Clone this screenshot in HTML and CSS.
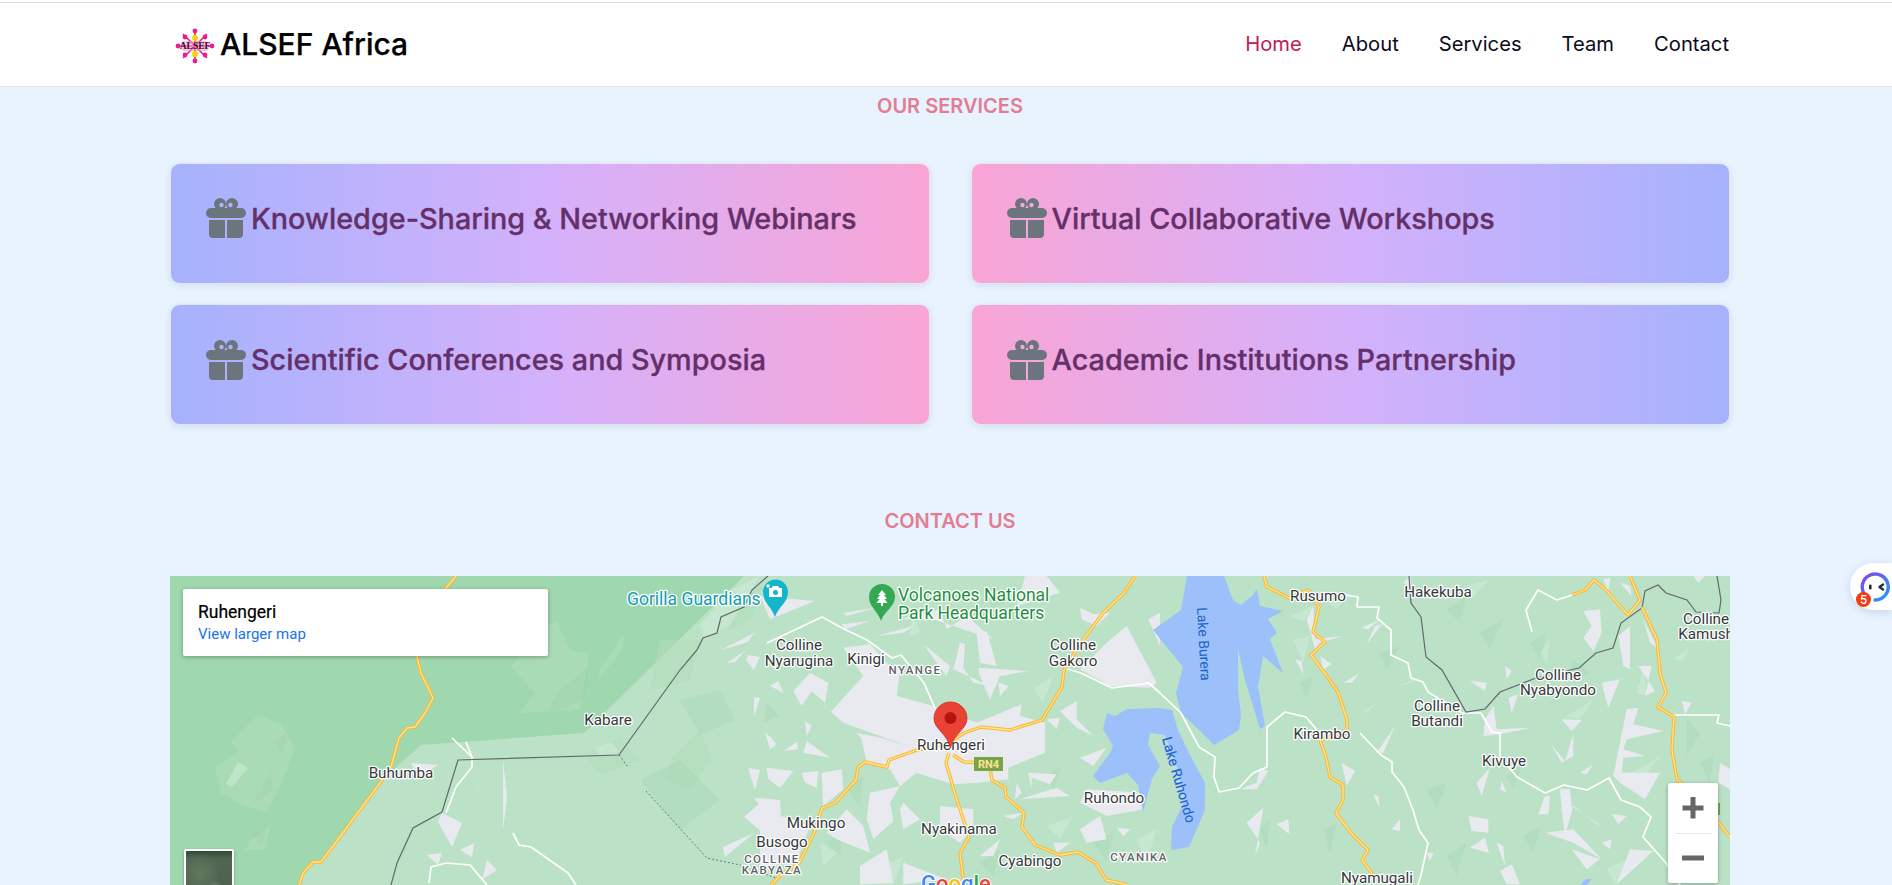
FILE: index.html
```html
<!DOCTYPE html>
<html lang="en">
<head>
<meta charset="utf-8">
<title>ALSEF Africa</title>
<link rel="stylesheet" href="styles.css">
</head>
<body>
<header class="site-header">
  <div class="header-inner">
    <a class="brand" href="#">
      <svg class="brand-logo" viewBox="0 0 40 36" aria-hidden="true">
        <g class="logo-spokes">
          <path d="M20 3V33M3 18H37M8 6L32 30M32 6L8 30"/>
        </g>
        <rect class="logo-glow" x="6" y="13" width="28" height="10" rx="4"/>
        <circle class="logo-core" cx="20" cy="10" r="3"/>
        <circle class="logo-core" cx="20" cy="26" r="3"/>
        <g class="logo-dots">
          <circle cx="20" cy="3" r="2.4"/><circle cx="20" cy="33" r="2.4"/>
          <circle cx="3" cy="18" r="2.4"/><circle cx="37" cy="18" r="2.4"/>
          <circle cx="10" cy="9" r="2.4"/><circle cx="30" cy="9" r="2.4"/>
          <circle cx="10" cy="27" r="2.4"/><circle cx="30" cy="27" r="2.4"/>
        </g>
        <text class="logo-text" x="20" y="21">ALSEF</text>
      </svg>
      <span class="brand-name">ALSEF Africa</span>
    </a>
    <nav class="main-nav">
      <a class="nav-link active" href="#">Home</a>
      <a class="nav-link" href="#">About</a>
      <a class="nav-link" href="#">Services</a>
      <a class="nav-link" href="#">Team</a>
      <a class="nav-link" href="#">Contact</a>
    </nav>
  </div>
</header>

<main class="page">
  <section class="services">
    <h2 class="section-label">OUR SERVICES</h2>
    <div class="service-grid">
      <div class="service-card to-pink">
        <svg class="gift" viewBox="0 0 40 40"><use href="#gift-icon"/></svg>
        <h3 class="service-title">Knowledge-Sharing &amp; Networking Webinars</h3>
      </div>
      <div class="service-card to-blue">
        <svg class="gift" viewBox="0 0 40 40"><use href="#gift-icon"/></svg>
        <h3 class="service-title">Virtual Collaborative Workshops</h3>
      </div>
      <div class="service-card to-pink">
        <svg class="gift" viewBox="0 0 40 40"><use href="#gift-icon"/></svg>
        <h3 class="service-title">Scientific Conferences and Symposia</h3>
      </div>
      <div class="service-card to-blue">
        <svg class="gift" viewBox="0 0 40 40"><use href="#gift-icon"/></svg>
        <h3 class="service-title">Academic Institutions Partnership</h3>
      </div>
    </div>
  </section>

  <section class="contact">
    <h2 class="section-label">CONTACT US</h2>
    <div class="map">
      <svg class="map-canvas" viewBox="170 576 1560 309" preserveAspectRatio="none">
        <defs>
          <g id="roads">
            <path d="M456 576L446 588L417 657L421 673L433 698L425 713L415 727L407 728L399 738L391 767L380 783L321 862L313 862L303 873L299 885"/>
            <path d="M1135 576L1124 593L1103 613L1083 640L1064 670L1062 687L1042 720L1010 730L981 727L964 733L949 743L917 750L889 760L887 767L865 762L858 767L856 780L835 803L822 808L814 833L799 863L781 875L771 885"/>
            <path d="M949 753L946 763L956 797L969 837L960 853L964 885"/>
            <path d="M953 755L964 762L989 763L992 780L1005 788L1006 797L1024 813L1022 827L1035 845L1060 855L1078 852L1096 863L1106 880L1128 885"/>
            <path d="M1264 576L1267 587L1289 598L1308 590L1319 607L1313 632L1325 642L1311 655L1326 675L1338 692L1347 720L1347 732L1320 740L1326 757L1330 777L1343 785L1343 800L1336 813L1353 835L1368 850L1362 860L1375 877"/>
            <path d="M1630 576L1640 600L1628 615L1606 590L1594 580L1585 590L1572 595"/>
            <path d="M1642 607L1657 640L1660 673L1666 693L1658 707L1674 717L1672 750L1677 780L1700 795L1719 823L1730 837"/>
          </g>
        </defs>

        <rect class="land" x="170" y="576" width="1560" height="309"/>
        <polygon class="forest" points="170,576 744,576 584,733 421,745 393,770 380,783 321,862 313,862 303,873 299,885 170,885"/>

        <g class="hill-light">
          <polygon points="258,715 282,725 295,747 282,783 266,813 238,803 221,793 215,768 238,752 231,742"/>
          <polygon points="511,667 534,640 556,620 570,650 589,653 580,710 519,713 535,693"/>
          <polygon points="600,670 624,633 622,650 598,680"/>
          <polygon points="660,640 700,640 690,680 650,690"/>
          <polygon points="585,755 620,738 640,760 600,775"/>
          <polygon points="672,757 700,730 712,760 690,790 665,780"/>
          <polygon points="740,600 765,585 750,620 728,630"/>
          <polygon points="250,840 270,825 265,850 245,850"/>
        </g>
        <g class="hill-dark">
          <polygon points="262,790 270,770 272,790 252,803"/>
          <polygon points="275,740 287,733 282,755"/>
          <polygon points="560,690 588,667 585,700 555,712 548,710"/>
          <polygon points="252,835 268,825 262,845"/>
          <polygon points="680,700 720,690 735,720 700,735"/>
          <polygon points="640,780 680,760 720,800 680,830"/>
        </g>
        <g class="hill-pale">
          <polygon points="238,762 248,768 232,787 226,784"/>
          <polygon points="595,748 612,742 620,752 600,757"/>
          <polygon points="730,590 760,576 730,625 705,640 700,625"/>
        </g>

        <g transform="translate(760 576) scale(.33333)">
          <g class="hill-dark">
            <polygon points="260,640 310,600 300,690"/>
            <polygon points="200,800 250,760 240,840"/>
            <polygon points="20,380 60,420 10,440"/>
            <polygon points="860,600 905,570 880,640"/>
            <polygon points="1000,800 1060,770 1040,860"/>
            <polygon points="660,860 720,820 700,900"/>
            <polygon points="1100,550 1180,500 1140,610"/>
            <polygon points="700,30 760,70 690,100"/>
          </g>
          <g class="hill-pale">
            <polygon points="350,880 430,840 400,925 340,925"/>
            <polygon points="180,800 230,830 190,870"/>
            <polygon points="860,750 940,720 900,790"/>
            <polygon points="1130,790 1190,760 1160,860"/>
            <polygon points="460,100 480,170 450,180"/>
            <polygon points="820,340 880,300 850,380"/>
          </g>
          <g class="urban">
            <polygon points="212,408 310,300 250,215 330,205 380,260 420,285 410,360 520,390 650,440 785,385 780,420 855,440 855,530 745,575 745,610 650,620 580,625 530,610 470,590 420,630 390,580 320,560 305,490 290,470 380,490 470,520 250,440"/>
            <polygon points="100,345 150,290 205,320 195,380 155,345 125,390"/>
            <polygon points="30,330 55,315 70,350"/>
            <polygon points="135,435 155,450 140,480"/>
            <polygon points="15,470 50,505 30,520"/>
            <polygon points="70,525 110,497 115,520"/>
            <polygon points="140,495 210,545 130,530"/>
            <polygon points="20,575 100,585 60,635 25,610"/>
            <polygon points="125,590 175,585 170,635 135,620"/>
            <polygon points="190,690 185,590 245,580 250,640"/>
            <polygon points="330,650 420,630 390,680 400,735 340,790 320,730"/>
            <polygon points="430,680 480,730 430,760 420,700"/>
            <polygon points="540,690 640,700 640,760 600,800 540,760"/>
            <polygon points="770,620 785,650 765,670"/>
            <polygon points="805,590 890,595 870,625 815,605 815,640"/>
            <polygon points="780,670 890,635 930,660"/>
            <polygon points="730,720 790,710 760,730"/>
            <polygon points="980,640 1150,650 1150,700 1040,720 960,680"/>
            <polygon points="860,430 900,425 890,460"/>
            <polygon points="900,405 950,375 950,430 1000,480 950,455"/>
            <polygon points="960,545 1040,515 1000,570"/>
            <polygon points="655,275 805,285 720,300 690,370 660,300"/>
            <polygon points="650,175 680,165 710,270 660,260"/>
            <polygon points="715,320 745,330 720,360"/>
            <polygon points="600,200 615,205 610,275 640,320 690,330 580,280"/>
            <polygon points="490,205 570,270 560,300"/>
            <polygon points="250,110 350,95 260,120"/>
            <polygon points="245,145 330,135 255,160"/>
            <polygon points="350,180 460,150 430,170"/>
            <polygon points="420,130 540,100 560,160 620,120 700,190 640,170 520,130"/>
            <polygon points="795,0 860,0 900,50 770,90"/>
            <polygon points="960,95 1000,115 1050,110 1010,150 965,130"/>
            <polygon points="1100,150 1190,320 1170,335 1050,330 960,280 1040,200"/>
            <polygon points="1165,130 1200,110 1200,210"/>
            <polygon points="0,665 60,745 0,780"/>
            <polygon points="0,770 70,720 150,750 120,830 40,870 0,880"/>
            <polygon points="200,770 260,700 310,750 330,830 230,790"/>
            <polygon points="300,870 380,820 400,920 300,925"/>
            <polygon points="430,860 560,910 430,925"/>
            <polygon points="660,840 720,790 700,840"/>
            <polygon points="880,800 930,800 890,830"/>
            <polygon points="960,760 1020,720 1040,790 980,800"/>
            <polygon points="1070,755 1110,760 1090,780"/>
            <polygon points="0,60 165,75 30,130"/>
          </g>
        </g>

        <g transform="translate(1240 576) scale(.33333)">
          <g class="hill-dark">
            <polygon points="620,100 680,60 660,140"/>
            <polygon points="720,170 790,130 750,220"/>
            <polygon points="420,230 480,210 440,280"/>
            <polygon points="180,320 220,300 200,370"/>
            <polygon points="800,600 850,560 820,640"/>
            <polygon points="560,640 620,620 590,700"/>
            <polygon points="620,840 680,800 650,900"/>
            <polygon points="1000,250 1050,290 990,320"/>
            <polygon points="250,760 290,740 270,830"/>
            <polygon points="1340,430 1380,470 1340,540"/>
            <polygon points="870,200 920,170 900,250"/>
            <polygon points="1380,560 1420,540 1410,620"/>
            <polygon points="850,780 900,750 880,830"/>
            <polygon points="60,760 90,730 80,820"/>
          </g>
          <g class="hill-pale">
            <polygon points="160,190 210,180 190,260"/>
            <polygon points="150,120 220,90 190,135"/>
            <polygon points="680,30 750,10 700,60"/>
            <polygon points="900,230 930,190 920,260"/>
            <polygon points="980,420 1060,370 1020,430"/>
            <polygon points="1160,600 1260,540 1220,590"/>
            <polygon points="1300,250 1350,215 1330,255"/>
            <polygon points="1190,350 1210,280 1220,360"/>
            <polygon points="1350,820 1410,760 1380,850"/>
            <polygon points="1100,880 1180,840 1130,925"/>
            <polygon points="260,80 330,50 290,100"/>
          </g>
          <g class="urban">
            <polygon points="1030,105 1080,100 1085,170 1060,225 1030,185 1055,150"/>
            <polygon points="1135,180 1170,150 1170,280 1150,270"/>
            <polygon points="1195,270 1235,270 1215,360 1245,345"/>
            <polygon points="1085,320 1140,310 1105,395"/>
            <polygon points="1325,375 1355,380 1335,415"/>
            <polygon points="1160,400 1195,395 1180,445 1270,465 1160,490 1150,520 1215,540 1150,545 1145,590 1260,590 1215,670 1140,620 1120,600"/>
            <polygon points="965,430 1025,432 995,465"/>
            <polygon points="930,500 975,555 1000,475 1000,540 965,560"/>
            <polygon points="1020,590 1060,565 1040,595"/>
            <polygon points="735,430 760,390 770,460 875,455 780,475 730,480"/>
            <polygon points="690,315 740,320 735,345"/>
            <polygon points="795,270 815,285 800,310"/>
            <polygon points="805,365 835,355 815,410"/>
            <polygon points="710,620 750,575 725,660"/>
            <polygon points="780,640 800,650 785,615"/>
            <polygon points="915,660 930,660 925,715 895,715"/>
            <polygon points="960,640 990,640 995,690 1070,740 1085,755 1000,690 975,780 965,700"/>
            <polygon points="915,770 1000,760 1085,850 1000,800"/>
            <polygon points="1115,715 1160,720 1135,745"/>
            <polygon points="1085,800 1115,790 1110,820"/>
            <polygon points="685,720 745,730 745,770 695,765"/>
            <polygon points="690,815 735,785 747,830"/>
            <polygon points="770,800 790,810 795,870"/>
            <polygon points="780,885 815,865 840,925 800,925"/>
            <polygon points="995,820 1080,850 1040,880"/>
            <polygon points="1170,820 1240,825 1130,925"/>
            <polygon points="405,150 425,145 380,205"/>
            <polygon points="365,155 420,130 385,160"/>
            <polygon points="200,130 220,90 225,190 310,180 240,200 225,220"/>
            <polygon points="240,240 275,265 250,280"/>
            <polygon points="310,320 360,290 335,320"/>
            <polygon points="165,250 185,255 190,295"/>
            <polygon points="305,560 345,585 320,630"/>
            <polygon points="400,655 415,660 418,695"/>
            <polygon points="455,760 480,730 480,765"/>
            <polygon points="110,745 145,730 148,775"/>
            <polygon points="20,740 70,695 45,840 60,800"/>
            <polygon points="365,420 415,375 385,400"/>
            <polygon points="475,330 545,305 510,320"/>
            <polygon points="410,530 465,450 430,530"/>
            <polygon points="560,830 580,830 570,855"/>
            <polygon points="490,20 510,0 515,30"/>
            <polygon points="1090,10 1110,5 1105,50"/>
            <polygon points="1140,20 1170,30 1175,60"/>
            <polygon points="1360,0 1395,0 1375,20"/>
            <polygon points="1210,130 1255,220 1230,200"/>
            <polygon points="0,640 50,620 60,575 85,585 50,640"/>
            <polygon points="1440,560 1470,580 1470,640 1435,620"/>
          </g>
        </g>

        <g class="urban">
          <polygon points="754,798 780,800 782,833"/>
          <polygon points="744,817 760,803 782,833 768,837"/>
          <polygon points="725,857 754,833 723,847"/>
          <polygon points="427,855 442,853 438,865"/>
          <polygon points="442,813 462,823 452,847 438,822"/>
          <polygon points="460,850 474,843 472,857"/>
          <polygon points="487,860 497,870 482,880"/>
          <polygon points="411,763 438,765 421,775 415,770"/>
          <polygon points="503,760 507,797 503,830"/>
          <polygon points="476,762 480,800 478,783"/>
          <polygon points="748,655 760,657 754,670 746,660"/>
          <polygon points="727,663 746,650 735,662"/>
          <polygon points="721,650 754,633 748,642"/>
          <polygon points="754,697 760,698 754,717"/>
          <polygon points="764,732 776,748 772,738"/>
          <polygon points="748,768 760,770 755,790"/>
        </g>

        <g class="water">
          <polygon points="1187,576 1224,576 1233,600 1241,605 1252,596 1257,589 1260,606 1283,611 1268,619 1277,633 1270,639 1283,673 1263,656 1258,686 1265,726 1260,729 1245,680 1238,650 1238,690 1241,715 1239,730 1214,745 1199,730 1181,713 1176,693 1183,667 1153,630 1181,610"/>
          <polygon points="1107,713 1115,716 1127,709 1160,708 1172,710 1178,730 1190,755 1205,783 1205,810 1189,847 1171,850 1172,827 1185,800 1178,770 1165,735 1150,733 1148,745 1160,766 1152,779 1143,812 1138,785 1127,773 1100,783 1093,776 1110,753 1113,746 1103,729"/>
          <polygon points="1587,885 1592,879 1586,879 1580,885"/>
        </g>

        <g class="rivers">
          <path d="M767 643L822 617L842 628L867 640L892 658L901 655L924 683L935 708"/>
          <path d="M1064 668L1081 673L1112 688L1149 683L1160 693L1181 713L1199 747L1215 757L1214 777L1219 792L1239 788L1253 773L1267 767L1267 727L1285 712L1306 717L1317 730"/>
          <path d="M1345 595L1358 597L1357 607L1379 607L1377 618L1391 630L1391 655L1408 663L1411 678L1423 682L1428 692L1462 713L1481 713L1492 732L1500 733L1500 757L1517 777L1545 793L1564 785L1587 790L1609 778L1621 800L1640 807L1651 817L1643 837L1666 863L1680 885"/>
          <path d="M1360 733L1381 755L1392 762L1392 772L1404 787L1413 810L1419 830L1428 843L1421 875L1418 885"/>
          <path d="M1532 632L1526 610L1538 590L1557 600L1572 595"/>
          <path d="M1674 715L1719 715L1717 723L1730 726"/>
          <path d="M452 738L472 757L466 742M472 757V767L456 787L446 813"/>
          <path d="M513 833L519 845L531 847L568 873L576 885"/>
          <path d="M429 883L431 867L446 863L470 865L487 885"/>
        </g>

        <g class="borders">
          <path d="M768 576L752 590L744 607L721 617L717 633L703 638L697 650L680 670L619 755L458 760L442 812L413 828L397 863L391 885"/>
          <path d="M1409 576L1411 603L1421 617L1426 657L1442 670L1466 712L1485 709L1500 692L1536 678L1579 668L1596 653L1613 648L1621 623L1642 608L1645 591L1658 585L1666 593L1687 600L1696 612L1719 613L1721 600L1717 576"/>
        </g>
        <g class="trails">
          <path d="M619 755L628 767M646 791L707 858L740 865L776 878"/>
        </g>

        <use class="road-outer" href="#roads"/>
        <use class="road-inner" href="#roads"/>

        <rect class="shield-bg" x="974" y="757" width="29" height="14"/>
        <text class="shield-text" x="988.5" y="768">RN4</text>
        <rect class="shield-bg" x="1716" y="803" width="4" height="12"/>

        <g class="place">
          <text x="799" y="650">Colline</text><text x="799" y="666">Nyarugina</text>
          <text x="866" y="664">Kinigi</text>
          <text x="1073" y="650">Colline</text><text x="1073" y="666">Gakoro</text>
          <text x="951" y="750">Ruhengeri</text>
          <text x="816" y="828">Mukingo</text>
          <text x="782" y="847">Busogo</text>
          <text x="959" y="834">Nyakinama</text>
          <text x="1030" y="866">Cyabingo</text>
          <text x="1114" y="803">Ruhondo</text>
          <text x="1318" y="601">Rusumo</text>
          <text x="1438" y="597">Hakekuba</text>
          <text x="1322" y="739">Kirambo</text>
          <text x="1437" y="711">Colline</text><text x="1437" y="726">Butandi</text>
          <text x="1558" y="680">Colline</text><text x="1558" y="695">Nyabyondo</text>
          <text x="1504" y="766">Kivuye</text>
          <text x="1706" y="624">Colline</text><text x="1708" y="639">Kamushi</text>
          <text x="1377" y="883">Nyamugali</text>
          <text x="608" y="725">Kabare</text>
          <text x="401" y="778">Buhumba</text>
        </g>
        <g class="region">
          <text x="915" y="674">NYANGE</text>
          <text x="1139" y="861">CYANIKA</text>
          <text x="772" y="863">COLLINE</text>
          <text x="772" y="874">KABYAZA</text>
        </g>
        <text class="poi-teal" x="627" y="605">Gorilla Guardians</text>
        <text class="poi-green" x="898" y="601">Volcanoes National</text>
        <text class="poi-green" x="898" y="619">Park Headquarters</text>
        <text class="lake" transform="translate(1203 644) rotate(87)" x="0" y="4">Lake Burera</text>
        <text class="lake" transform="translate(1178 780) rotate(74)" x="0" y="4">Lake Ruhondo</text>

        <path class="pin-teal" d="M775 617C772 607 763 603 763 592a12.500 12.500 0 0 1 25 0C788 603 778 607 775 617z"/>
        <path class="pin-glyph" d="M769 588h2.500l1.500-2h5l1.500 2h2.500v9h-13z"/>
        <circle class="pin-teal" cx="775.500" cy="592.500" r="2.500"/>
        <circle class="pin-glyph" cx="768" cy="586" r="1.700"/>
        <path class="pin-green" d="M881 621C878 611 869 607 869 597a13 13 0 0 1 26 0C895 607 884 611 881 621z"/>
        <path class="pin-glyph" d="M882 590l4 5h-2l3 4h-2.500l3 4h-4.500v3h-2v-3h-4.500l3-4h-2.500l3-4h-2z"/>

        <path class="marker" d="M950.500 748C947 733 934 729 934 718.500a16.500 16.500 0 0 1 33 0C967 729 954 733 950.500 748z"/>
        <circle class="marker-dot" cx="950.500" cy="718" r="6"/>

        <text class="google" x="921" y="891"><tspan class="g-blue">G</tspan><tspan class="g-red">o</tspan><tspan class="g-yellow">o</tspan><tspan class="g-blue">g</tspan><tspan class="g-green">l</tspan><tspan class="g-red">e</tspan></text>
      </svg>

      <div class="map-card">
        <div class="map-card-title">Ruhengeri</div>
        <a class="map-card-link" href="#">View larger map</a>
      </div>
      <div class="map-thumb"></div>
      <div class="zoom-ctl">
        <button class="zoom-btn" type="button" aria-label="Zoom in">
          <svg viewBox="0 0 24 24"><path d="M9.500 1h5v8.500h8v5h-8v8h-5v-8h-8v-5h8z"/></svg>
        </button>
        <span class="zoom-sep"></span>
        <button class="zoom-btn" type="button" aria-label="Zoom out">
          <svg viewBox="0 0 24 24"><path d="M1 9.500h22v5H1z"/></svg>
        </button>
      </div>
    </div>
  </section>
</main>

<aside class="chat-widget">
  <svg class="chat-face" viewBox="0 0 32 32" aria-hidden="true">
    <defs>
      <linearGradient id="ring" x1="0" y1="0" x2="1" y2="1">
        <stop offset="0" stop-color="#8a3ff0"/>
        <stop offset="1" stop-color="#1ea0f5"/>
      </linearGradient>
    </defs>
    <path class="chat-ring" d="M6 25A13 13 0 1 1 16 30"/>
    <rect class="chat-eye" x="10" y="14.500" width="2.600" height="5" rx="1.300"/>
    <path class="chat-wink" d="M24 14.500L20.500 17L24 19.500"/>
  </svg>
  <span class="chat-badge">5</span>
</aside>

<svg class="icon-defs" aria-hidden="true">
  <symbol id="gift-icon" viewBox="0 0 40 40">
    <path fill-rule="evenodd" d="M8 6a6 6 0 0 1 12 0a6 6 0 0 1-12 0zM20 6a6 6 0 0 1 12 0a6 6 0 0 1-12 0zM13.300 7a2.200 2.200 0 1 0 4.400 0a2.200 2.200 0 1 0-4.400 0zM22.300 7a2.200 2.200 0 1 0 4.400 0a2.200 2.200 0 1 0-4.400 0z"/>
    <path d="M5 10H35a5 5 0 0 1 0 10H5a5 5 0 0 1 0-10z"/>
    <path d="M3 22H19V40H7a4 4 0 0 1-4-4zM21 22H37V36a4 4 0 0 1-4 4H21z"/>
  </symbol>
</svg>
</body>
</html>
```
FILE: styles.css
```css
* { box-sizing: border-box; }
html, body { margin: 0; padding: 0; }
body {
  height: 885px;
  overflow: hidden;
  background: #e8f3fe;
  font-family: Inter, "Liberation Sans", sans-serif;
  color: #000;
}
a { text-decoration: none; color: inherit; }

.site-header {
  height: 87px;
  padding-top: 2px;
  background: #fff;
  border-bottom: 1px solid #dee2e6;
  position: relative;
}
.site-header::before {
  content: "";
  position: absolute;
  left: 0; right: 0; top: 2px;
  height: 1px;
  background: #dedede;
}
.header-inner {
  width: 1560px;
  height: 84px;
  margin-left: 170px;
  padding-right: 1px;
  display: flex;
  align-items: center;
  justify-content: space-between;
}
.brand { display: flex; align-items: center; gap: 5px; padding-left: 5px; }
.brand-logo { width: 40px; height: 36px; display: block; margin-top: 3px; }
.brand-name { font-size: 30px; font-weight: 500; -webkit-text-stroke: .25px #000; }
.logo-spokes path { stroke: #ec1c8e; stroke-width: 1.6; fill: none; }
.logo-glow { fill: #ef9ab8; opacity: .6; }
.logo-core { fill: #ffd400; }
.logo-dots circle { fill: #ec1c8e; }
.logo-text {
  font-family: "Liberation Serif", serif;
  font-size: 9.500px;
  font-weight: 700;
  fill: #3a0a3a;
  text-anchor: middle;
}
.main-nav { display: flex; gap: 40px; margin-top: -1px; }
.nav-link { font-size: 20.200px; font-weight: 400; color: #0b0b1a; }
.nav-link.active { color: #c01a5a; }

.page { width: 1560px; margin-left: 170px; }
.section-label {
  margin: 0;
  text-align: center;
  font-size: 20px;
  font-weight: 600;
  line-height: 23px;
  color: #e27d92;
}
.services { padding-top: 8px; }
.service-grid {
  margin-top: 44.500px;
  display: grid;
  grid-template-columns: 759.500px 759.500px;
  grid-auto-rows: 121px;
  column-gap: 41px;
  row-gap: 20.500px;
}
.service-card {
  padding: 0 35px 10px;
  border-radius: 10px;
  border: 1px solid #e3e6f2;
  box-shadow: 0 2px 6px rgba(120, 130, 170, .18);
  display: flex;
  align-items: center;
  gap: 5px;
}
.to-pink { background: linear-gradient(90deg, #a6b2fd 0%, #d4b1fb 50%, #f9a5d5 100%); }
.to-blue { background: linear-gradient(90deg, #f9a5d5 0%, #d4b1fb 50%, #a6b2fd 100%); }
.gift { width: 40px; height: 40px; fill: #6c757d; flex: none; }
.service-title {
  margin: 0;
  font-size: 28.800px;
  font-weight: 500;
  color: #652f69;
  -webkit-text-stroke: .3px #652f69;
}
.icon-defs { position: absolute; width: 0; height: 0; }

.contact { padding-top: 85px; }
.contact .section-label { margin-bottom: 43px; }

.map { position: relative; width: 1560px; height: 309px; overflow: hidden; }
.map-canvas { display: block; width: 100%; height: 100%; }
.land { fill: #bbe2c7; }
.forest { fill: #9fd8ae; }
.hill-light polygon { fill: #b0deb9; opacity: .6; }
.hill-dark polygon { fill: #94cca4; opacity: .22; }
.hill-pale polygon { fill: #cdebd6; opacity: .6; }
.urban polygon { fill: #e8eaf0; }
.water polygon { fill: #9cc0f9; }
.rivers path { fill: none; stroke: #fff; stroke-width: 1.700; stroke-linejoin: round; }
.borders path { fill: none; stroke: #62686c; stroke-width: 1.200; }
.trails path { fill: none; stroke: #6e7a74; stroke-width: 1; stroke-dasharray: 2 2; }
.road-outer { fill: none; stroke: #fbb92e; stroke-width: 3.400; stroke-linejoin: round; }
.road-inner { fill: none; stroke: #fee39a; stroke-width: 1.300; stroke-linejoin: round; }
.shield-bg { fill: #78a647; }
.shield-text {
  font-family: Roboto, sans-serif;
  font-size: 11px;
  font-weight: 700;
  fill: #fde293;
  text-anchor: middle;
}
.place text, .region text, .poi-teal, .poi-green, .lake {
  font-family: Roboto, sans-serif;
  paint-order: stroke;
  stroke: #fff;
  stroke-width: 2.500px;
  stroke-linejoin: round;
}
.place text { font-size: 15.200px; fill: #36393c; text-anchor: middle; }
.region text { font-size: 11.500px; font-weight: 500; letter-spacing: 1.400px; fill: #5f6368; text-anchor: middle; }
.poi-teal { font-size: 17.500px; fill: #129eaf; }
.poi-green { font-size: 17.500px; fill: #1e8e3e; }
.lake { font-size: 14px; fill: #1a62c9; stroke: #9cc0f9; stroke-width: 1px; text-anchor: middle; }
.pin-teal { fill: #12b5cb; }
.pin-green { fill: #34a853; }
.pin-glyph { fill: #fff; }
.marker { fill: #ea4335; stroke: #d1281f; stroke-width: .8; }
.marker-dot { fill: #b31412; }
.google { font-family: Roboto, sans-serif; font-size: 22px; font-weight: 500; paint-order: stroke; stroke: #fff; stroke-width: 2px; }
.g-blue { fill: #4285f4; }
.g-red { fill: #ea4335; }
.g-yellow { fill: #fbbc05; }
.g-green { fill: #34a853; }

.map-card {
  position: absolute;
  left: 13px;
  top: 13px;
  width: 365px;
  height: 67px;
  padding: 13px 15px;
  background: #fff;
  border-radius: 2px;
  box-shadow: 0 1px 4px rgba(0, 0, 0, .3);
  font-family: Roboto, sans-serif;
}
.map-card-title { font-size: 17.500px; font-weight: 400; line-height: 20px; color: #000; -webkit-text-stroke: .2px #000; }
.map-card-link { display: block; margin-top: 3px; font-size: 15px; line-height: 18px; color: #1a73e8; }
.map-thumb {
  position: absolute;
  left: 14px;
  top: 273px;
  width: 50px;
  height: 60px;
  border: 2px solid #fff;
  border-radius: 2px;
  box-shadow: 0 1px 3px rgba(0, 0, 0, .3);
  background:
    radial-gradient(circle at 62% 68%, #a3ad9f 0, #6a7c66 7%, transparent 18%),
    radial-gradient(circle at 30% 40%, #64785f 0, transparent 45%),
    linear-gradient(180deg, #2f4a38 0, #506651 14%, #4b6150 100%);
}
.zoom-ctl {
  position: absolute;
  left: 1498px;
  top: 207px;
  width: 50px;
  height: 100px;
  background: #fff;
  border-radius: 2px;
  box-shadow: 0 1px 4px rgba(0, 0, 0, .3);
  display: flex;
  flex-direction: column;
  align-items: center;
}
.zoom-btn {
  flex: 1;
  width: 100%;
  padding: 0;
  border: 0;
  background: none;
  display: flex;
  align-items: center;
  justify-content: center;
}
.zoom-btn svg { width: 24px; height: 24px; fill: #666; }
.zoom-sep { width: 37px; height: 1px; background: #e6e6e6; }

.chat-widget {
  position: fixed;
  right: 0;
  top: 563px;
  width: 42px;
  height: 47px;
  background: #fff;
  border-radius: 24px 0 0 24px;
  box-shadow: 0 2px 10px rgba(60, 80, 120, .18);
}
.chat-face { position: absolute; left: 9px; top: 7px; width: 32px; height: 32px; }
.chat-ring { fill: none; stroke: url(#ring); stroke-width: 3.400; stroke-linecap: round; }
.chat-eye { fill: #1f2a44; }
.chat-wink { fill: none; stroke: #1f2a44; stroke-width: 2.400; stroke-linecap: round; stroke-linejoin: round; }
.chat-badge {
  position: absolute;
  left: 6px;
  top: 29px;
  width: 15px;
  height: 15px;
  border-radius: 50%;
  background: #f23c0f;
  color: #fff;
  font: 500 13px/15px Roboto, sans-serif;
  text-align: center;
}
```
